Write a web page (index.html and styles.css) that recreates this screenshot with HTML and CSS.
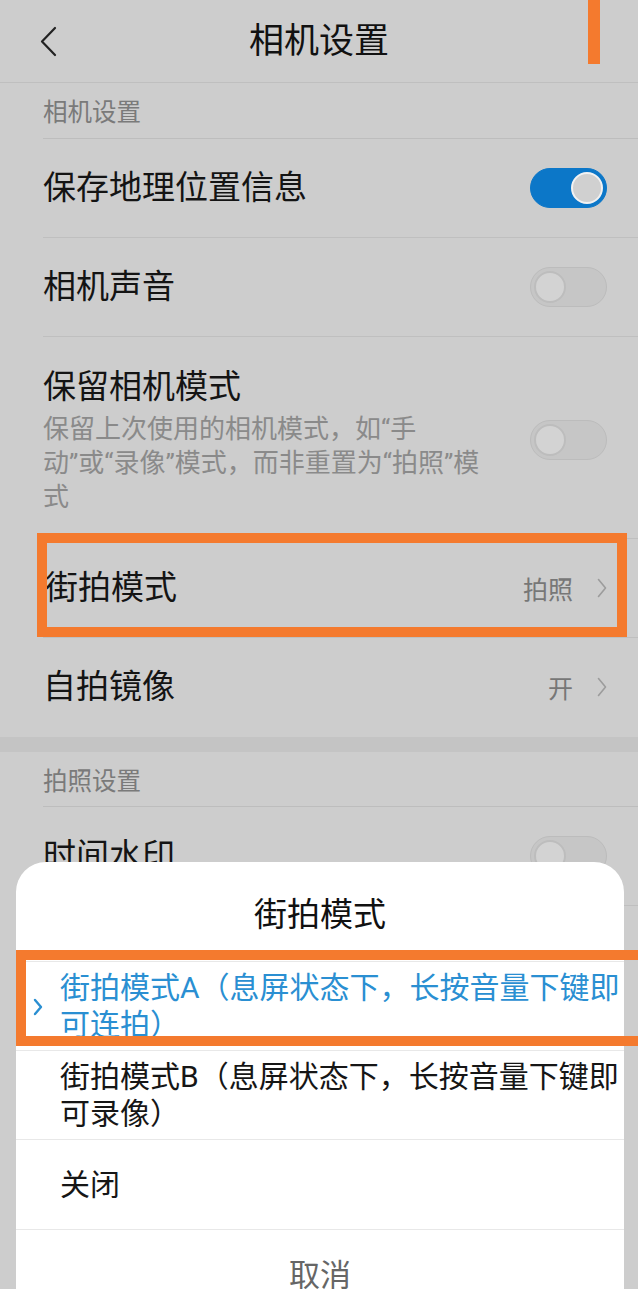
FILE: index.html
```html
<!DOCTYPE html>
<html lang="zh-CN">
<head>
<meta charset="utf-8">
<title>相机设置</title>
<link rel="stylesheet" href="styles.css">
</head>
<body>
<div class="page">
  <header class="topbar">
    <div class="back">
      <svg width="20" height="34" viewBox="0 0 20 34"><polyline points="15,2 2,15.5 15,29" fill="none" stroke="#222" stroke-width="2.2" stroke-linecap="round" stroke-linejoin="round"/></svg>
    </div>
    <h1 class="title">相机设置</h1>
    <div></div>
  </header>

  <section class="group">
    <div class="label">相机设置</div>
    <div class="row">
      <span class="row-title">保存地理位置信息</span>
      <span class="switch on"><span class="knob"></span></span>
    </div>
    <div class="row">
      <span class="row-title">相机声音</span>
      <span class="switch"><span class="knob"></span></span>
    </div>
    <div class="row tall">
      <div class="row-text">
        <div class="row-title">保留相机模式</div>
        <div class="row-sub">保留上次使用的相机模式，如“手<br>动”或“录像”模式，而非重置为“拍照”模<br>式</div>
      </div>
      <span class="switch"><span class="knob"></span></span>
    </div>
    <div class="row">
      <span class="row-title shift">街拍模式</span>
      <span class="value">拍照<svg class="chev" width="10" height="20" viewBox="0 0 10 20"><polyline points="1.5,1.5 8.5,10 1.5,18.5" fill="none" stroke="#9c9c9c" stroke-width="1.6" stroke-linecap="round" stroke-linejoin="round"/></svg></span>
    </div>
    <div class="row">
      <span class="row-title">自拍镜像</span>
      <span class="value">开<svg class="chev" width="10" height="20" viewBox="0 0 10 20"><polyline points="1.5,1.5 8.5,10 1.5,18.5" fill="none" stroke="#9c9c9c" stroke-width="1.6" stroke-linecap="round" stroke-linejoin="round"/></svg></span>
    </div>
  </section>

  <div class="band"></div>

  <section class="group">
    <div class="label second">拍照设置</div>
    <div class="row">
      <span class="row-title">时间水印</span>
      <span class="switch"><span class="knob"></span></span>
    </div>
    <div class="row">
      <span class="row-title">参考线</span>
      <span class="switch"><span class="knob"></span></span>
    </div>
  </section>

  <div class="sheet">
    <div class="sheet-title">街拍模式</div>
    <div class="option selected">
      <svg class="opt-chev" width="10" height="18" viewBox="0 0 10 18"><polyline points="2,2 8,9 2,16" fill="none" stroke="#2a8fd2" stroke-width="2.4" stroke-linecap="round" stroke-linejoin="round"/></svg>
      <span>街拍模式A（息屏状态下，长按音量下键即<br>可连拍）</span>
    </div>
    <div class="option">
      <span>街拍模式B（息屏状态下，长按音量下键即<br>可录像）</span>
    </div>
    <div class="option">
      <span>关闭</span>
    </div>
    <div class="option cancel">
      <span>取消</span>
    </div>
  </div>

  <div class="annot bar"></div>
  <div class="annot box-row"></div>
  <div class="annot box-option"></div>
</div>
</body>
</html>
```

FILE: styles.css
```css
html, body {
  margin: 0;
  padding: 0;
}
body {
  background: #cdcdcd;
  font-family: Roboto, "Noto Sans CJK SC", sans-serif;
  color: #141414;
}
.page {
  position: relative;
  width: 638px;
  height: 1289px;
  overflow: hidden;
  background: #cdcdcd;
}
.topbar {
  display: grid;
  grid-template-columns: 1fr auto 1fr;
  align-items: center;
  height: 82px;
  border-bottom: 1px solid #bfbfbf;
}
.back {
  padding-left: 40px;
  display: flex;
  align-items: center;
  padding-top: 4px;
}
.title {
  margin: 0;
  font-size: 35px;
  font-weight: 400;
  color: #111;
  line-height: 1;
}
.group {
  margin-left: 43px;
}
.label {
  height: 55px;
  display: flex;
  align-items: center;
  font-size: 24.5px;
  color: #7a7a7a;
  border-bottom: 1px solid #bdbdbd;
}
.label.second {
  height: 54px;
}
.row {
  display: flex;
  align-items: center;
  justify-content: space-between;
  padding-right: 31px;
  border-bottom: 1px solid #bfbfbf;
  box-sizing: border-box;
  height: 99px;
}
.group > .row:last-child {
  border-bottom-color: transparent;
}
.row.tall {
  height: 202px;
  padding-top: 29px;
  padding-bottom: 25px;
}
.row-title {
  font-size: 33px;
  line-height: 42px;
  color: #141414;
}
.row-title.shift {
  padding-left: 2px;
}
.row-sub {
  margin-top: 4px;
  font-size: 26px;
  line-height: 34px;
  color: #8a8a8a;
}
.value {
  display: flex;
  align-items: center;
  gap: 24px;
  font-size: 25px;
  color: #777;
}
.switch {
  position: relative;
  width: 77px;
  height: 40px;
  border-radius: 20px;
  box-sizing: border-box;
  background: #c6c6c6;
  border: 1px solid #bcbcbc;
  flex-shrink: 0;
}
.switch .knob {
  position: absolute;
  top: 3px;
  left: 3px;
  width: 32px;
  height: 32px;
  border-radius: 50%;
  box-sizing: border-box;
  background: #d3d3d3;
  border: 2px solid #bdbdbd;
}
.switch.on {
  background: #0c77c8;
  border-color: #0c77c8;
}
.switch.on .knob {
  left: auto;
  right: 3px;
  background: #d0d0d0;
  border: 2px solid #f2f2f2;
}
.band {
  height: 15px;
  background: #c4c4c4;
}
.sheet {
  position: absolute;
  left: 16px;
  top: 862px;
  width: 608px;
  height: 500px;
  background: #ffffff;
  border-radius: 30px 30px 0 0;
}
.sheet-title {
  height: 99px;
  display: flex;
  align-items: center;
  justify-content: center;
  font-size: 33px;
  color: #111;
}
.option {
  display: flex;
  align-items: center;
  min-height: 88px;
  padding-left: 44px;
  padding-right: 0;
  font-size: 30px;
  line-height: 37px;
  color: #161616;
  border-top: 1px solid #e8e8e8;
  white-space: nowrap;
}
.option.selected {
  padding-left: 17px;
  color: #2a8fd2;
  gap: 17px;
}
.opt-chev {
  flex-shrink: 0;
  margin-top: 2px;
}
.option.cancel {
  justify-content: center;
  padding-left: 0;
  min-height: 90px;
  color: #666;
  font-size: 31px;
}
.option:nth-child(4) {
  min-height: 89px;
}
.annot {
  position: absolute;
  box-sizing: border-box;
  border: 10px solid #f47a2e;
}
.annot.bar {
  left: 588px;
  top: 0;
  width: 12px;
  height: 64px;
  border: none;
  background: #f47a2e;
}
.annot.box-row {
  left: 37px;
  top: 533px;
  width: 590px;
  height: 104px;
}
.annot.box-option {
  left: 16px;
  top: 950px;
  width: 640px;
  height: 96px;
}
```
